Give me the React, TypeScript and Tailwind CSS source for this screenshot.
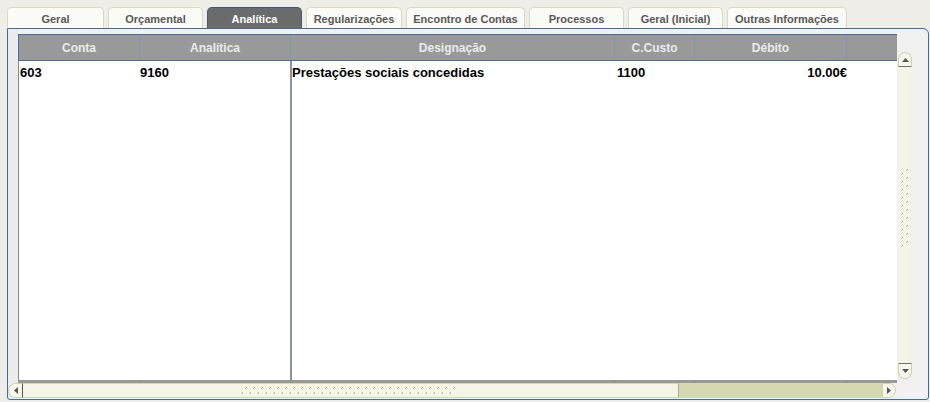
import React from "react";

// tabs of the form, widths measured from the screen
const tabs = [
  { label: "Geral", w: "w-[97px]" },
  { label: "Orçamental", w: "w-[95px]" },
  { label: "Analítica", w: "w-[95px]", active: true },
  { label: "Regularizações", w: "w-[96px]" },
  { label: "Encontro de Contas", w: "w-[119px]" },
  { label: "Processos", w: "w-[95px]" },
  { label: "Geral (Inicial)", w: "w-[95px]" },
  { label: "Outras Informações", w: "w-[120px]" },
];

const headerCols = [
  { label: "Conta", w: "w-[121px]" },
  { label: "Analítica", w: "w-[151px]" },
  { label: "Designação", w: "w-[324px]" },
  { label: "C.Custo", w: "w-[80px]" },
  { label: "Débito", w: "w-[152px]" },
  { label: "", w: "w-[50px]", last: true },
];

/* small olive slashes used on the scrollbar thumbs */
const GripH: React.FC = () => (
  <svg width="220" height="9" viewBox="0 0 220 9">
    {Array.from({ length: 27 }).map((_, i) => (
      <g key={i}>
        <rect x={i * 8 + 5} y={1} width={1} height={1} fill="#9c9d6e" />
        <rect x={i * 8 + 4} y={2} width={1} height={1} fill="#c4c69c" />
        <rect x={i * 8 + 1} y={6} width={1} height={1} fill="#9c9d6e" />
        <rect x={i * 8} y={7} width={1} height={1} fill="#c4c69c" />
      </g>
    ))}
  </svg>
);

const GripV: React.FC = () => (
  <svg width="10" height="80" viewBox="0 0 10 80">
    {Array.from({ length: 10 }).map((_, i) => (
      <g key={i}>
        <rect x={7} y={i * 8} width={1} height={1} fill="#9c9d6e" />
        <rect x={6} y={i * 8 + 1} width={1} height={1} fill="#c4c69c" />
        <rect x={2} y={i * 8 + 4} width={1} height={1} fill="#9c9d6e" />
        <rect x={1} y={i * 8 + 5} width={1} height={1} fill="#c4c69c" />
      </g>
    ))}
  </svg>
);

const Arrow: React.FC<{ dir: "up" | "down" | "left" | "right" }> = ({ dir }) => {
  const pts = {
    up: "0,4 3.5,0 7,4",
    down: "0,0 7,0 3.5,4",
    left: "4,0 4,7 0,3.5",
    right: "0,0 4,3.5 0,7",
  }[dir];
  const vert = dir === "up" || dir === "down";
  return (
    <svg width={vert ? 7 : 4} height={vert ? 4 : 7} viewBox={vert ? "0 0 7 4" : "0 0 4 7"}>
      <polygon points={pts} fill="#555555" />
    </svg>
  );
};

const App: React.FC = () => {
  return (
    <div className="w-[930px] h-[402px] overflow-hidden bg-[#eeede7] font-['Liberation_Sans',Arial,sans-serif]">
      {/* ================= TABS ================= */}
      <div className="flex items-end gap-[4px] pl-[7px] h-[28px]">
        {tabs.map((t) => (
          <div
            key={t.label}
            className={
              t.active
                ? `${t.w} h-[21px] flex items-center justify-center pt-[2px] rounded-t-[5px] border border-b-0 border-[#41597a] bg-[#6b6b6b] text-white text-[11px] font-bold`
                : `${t.w} h-[21px] flex items-center justify-center pt-[2px] rounded-t-[5px] border border-b-0 border-[#d8dbbd] bg-[#fbfbf7] text-[#595959] text-[11px] font-bold`
            }
          >
            {t.label}
          </div>
        ))}
      </div>

      {/* ================= PANEL ================= */}
      <div className="ml-[7px] w-[922px] h-[372px] border border-[#3a6ea5] rounded-tr-[6px] rounded-b-[3px] bg-[#f1f1f1] flex flex-col overflow-hidden">
        <div className="flex h-[354px]">
          <div className="w-[10px] bg-[#ececec]" />

          {/* table */}
          <div className="w-[879px] flex flex-col pt-[5px]">
            <div className="flex h-[27px] border-y border-l border-[#3d6fa6] bg-[#999999] text-[12px] font-bold text-[#ebebeb]">
              {headerCols.map((c) => (
                <div
                  key={c.w + c.label}
                  className={
                    c.last
                      ? `${c.w} flex items-center justify-center`
                      : `${c.w} flex items-center justify-center border-r border-[#8596ab]`
                  }
                >
                  {c.label}
                </div>
              ))}
            </div>

            <div className="flex-1 flex pt-[1px] bg-white border-l border-[#858b94] text-[13px] font-bold text-black">
              <div className="w-[121px] pl-[1px] h-[22px] leading-[22px]">603</div>
              <div className="w-[152px] -mt-[1px] pt-[1px] border-r-2 border-[#8e949c]">
                <div className="h-[22px] leading-[22px]">9160</div>
              </div>
              <div className="w-[323px] h-[22px] leading-[22px]">Prestações sociais concedidas</div>
              <div className="w-[80px] pl-[2px] h-[22px] leading-[22px]">1100</div>
              <div className="w-[152px] text-right h-[22px] leading-[22px]">10.00€</div>
              <div className="w-[50px]" />
            </div>

            <div className="flex h-[3px] bg-[#999999]">
              <div className="w-[122px] border-r border-[#8a8f96]" />
              <div className="w-[151px] border-r border-[#8a8f96]" />
              <div className="w-[324px] border-r border-[#8a8f96]" />
              <div className="w-[80px] border-r border-[#8a8f96]" />
              <div className="w-[152px] border-r border-[#8a8f96]" />
            </div>
          </div>

          {/* vertical scrollbar */}
          <div className="w-[15px] pt-[23px]">
            <div className="ml-[1px] w-[14px] h-[327px] flex flex-col">
              <div className="h-[15px] rounded-t-[7px] border border-[#cfd3aa] border-b-[#6f6f6f] bg-[#f7f7ee] flex items-center justify-center">
                <Arrow dir="up" />
              </div>
              <div className="flex-1 mx-[1px] bg-[#f4f5e5] flex items-center justify-center pb-[12px]">
                <GripV />
              </div>
              <div className="h-[16px] rounded-b-[7px] border border-[#cfd3aa] border-t-[#6f6f6f] bg-[#f7f7ee] flex items-center justify-center">
                <Arrow dir="down" />
              </div>
            </div>
          </div>
          <div className="w-[16px]" />
        </div>

        {/* horizontal scrollbar */}
        <div className="flex w-[888px] h-[15px]">
          <div className="w-[15px] rounded-l-[7px] border border-[#cfd3aa] border-r-[#555555] bg-[#f7f7ee] flex items-center justify-center">
            <Arrow dir="left" />
          </div>
          <div className="w-[656px] border-y border-r border-[#d3d7b4] border-r-[#a9ad85] bg-[#f4f5e5] flex items-center justify-center">
            <GripH />
          </div>
          <div className="flex-1 bg-[#d3d9b1]" />
          <div className="w-[14px] rounded-r-[7px] border border-[#cfd3aa] bg-[#f7f7ee] flex items-center justify-center">
            <Arrow dir="right" />
          </div>
        </div>
      </div>
    </div>
  );
};

export default App;
